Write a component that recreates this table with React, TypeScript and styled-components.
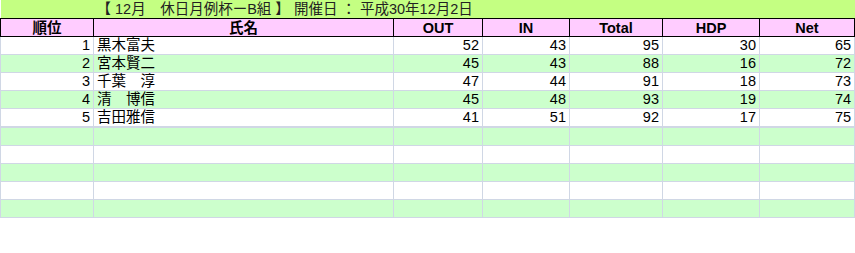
import React from "react";
import styled, { createGlobalStyle } from "styled-components";

const Global = createGlobalStyle`
  html, body { margin: 0; padding: 0; background: #ffffff; }
  body { font-family: "Liberation Sans", "Noto Sans CJK JP", sans-serif; }
`;

const Sheet = styled.table`
  border-collapse: collapse;
  table-layout: fixed;
  width: 854px;
  font-size: 14.5px;
  color: #000;
`;

const TitleRow = styled.tr`
  height: 18px;
  background: #c4ff82;
`;

const TitleCell = styled.td`
  padding: 0 0 0 3px;
  height: 18px;
  line-height: 17px;
  white-space: nowrap;
  color: #222;
  text-align: left;
  border-bottom: 1px solid #000;
`;

const HeadRow = styled.tr`
  height: 18px;
  background: #ffccff;
`;

const HeadCell = styled.th`
  border: 1px solid #000;
  padding: 0;
  height: 17px;
  line-height: 16px;
  font-weight: bold;
  text-align: center;
`;

const DataRow = styled.tr<{ $alt: boolean; $gap?: boolean }>`
  height: 18px;
  background: ${(p) => (p.$alt ? "#ccffcc" : "#ffffff")};
  td {
    border-top: ${(p) => (p.$gap ? "2px solid #d0d7e5" : "1px solid #d0d7e5")};
    height: ${(p) => (p.$gap ? "16px" : "17px")};
  }
`;

const Cell = styled.td<{ $align: "left" | "right" }>`
  border-left: 1px solid #d0d7e5;
  border-right: 1px solid #d0d7e5;
  border-bottom: 1px solid #d0d7e5;
  padding: 0 3px;
  line-height: 17px;
  text-align: ${(p) => p.$align};
  white-space: nowrap;
  overflow: hidden;
`;

const widths = [93, 300, 89, 87, 93, 97, 95];
const headers = ["順位", "氏名", "OUT", "IN", "Total", "HDP", "Net"];

const rows: [number, string, number, number, number, number, number][] = [
  [1, "黒木富夫", 52, 43, 95, 30, 65],
  [2, "宮本賢二", 45, 43, 88, 16, 72],
  [3, "千葉　淳", 47, 44, 91, 18, 73],
  [4, "清　博信", 45, 48, 93, 19, 74],
  [5, "吉田雅信", 41, 51, 92, 17, 75],
];

export default function App() {
  return (
    <>
      <Global />
      <Sheet>
        <colgroup>
          {widths.map((w, i) => (
            <col key={i} style={{ width: w }} />
          ))}
        </colgroup>
        <tbody>
          <TitleRow>
            <TitleCell />
            <TitleCell colSpan={6}>
              【 12月　休日月例杯ーB組 】 開催日 ： 平成30年12月2日
            </TitleCell>
          </TitleRow>
          <HeadRow>
            {headers.map((h) => (
              <HeadCell key={h}>{h}</HeadCell>
            ))}
          </HeadRow>
          {rows.map((r, i) => (
            <DataRow key={r[0]} $alt={i % 2 === 1}>
              {r.map((v, j) => (
                <Cell key={j} $align={j === 1 ? "left" : "right"}>
                  {v}
                </Cell>
              ))}
            </DataRow>
          ))}
          {[0, 1, 2, 3, 4].map((i) => (
            <DataRow key={`e${i}`} $alt={i % 2 === 0} $gap={i === 0}>
              {widths.map((_, j) => (
                <Cell key={j} $align="left" />
              ))}
            </DataRow>
          ))}
        </tbody>
      </Sheet>
    </>
  );
}
